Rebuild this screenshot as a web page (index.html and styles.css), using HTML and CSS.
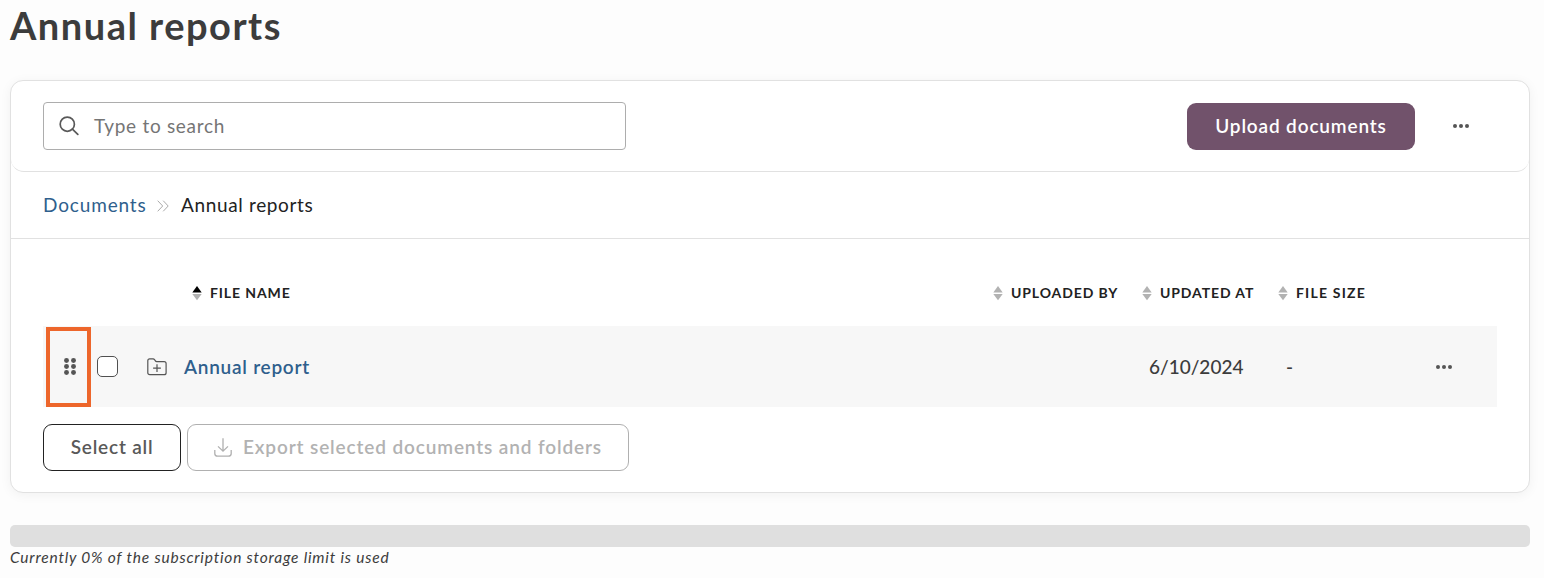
FILE: index.html
```html
<!DOCTYPE html>
<html lang="en">
<head>
<meta charset="utf-8">
<title>Annual reports</title>
<link rel="stylesheet" href="styles.css">
</head>
<body>
<h1 class="title"><span>Annual reports</span></h1>
<main class="card">
  <div class="toolbar">
    <label class="search">
      <svg class="search-icon" width="20" height="20" viewBox="0 0 20 20"><circle cx="8.3" cy="8.2" r="7.1"/><path d="M13.4 13.2 18.8 18.4"/></svg>
      <span class="placeholder">Type to search</span>
    </label>
    <button class="btn upload"><span>Upload documents</span></button>
    <svg class="more" width="16" height="4" viewBox="0 0 16 4"><circle cx="2" cy="2" r="2"/><circle cx="8" cy="2" r="2"/><circle cx="14" cy="2" r="2"/></svg>
  </div>
  <nav class="crumbs">
    <a class="crumb-link">Documents</a>
    <svg class="chevrons" width="12" height="12" viewBox="0 0 12 12"><path d="M.7.7 5.7 6 .7 11.3M6.2.7 11.2 6 6.2 11.3"/></svg>
    <span class="crumb-current">Annual reports</span>
  </nav>
  <div class="content">
    <div class="grid head">
      <div class="th name"><svg class="sort active" width="10" height="15" viewBox="0 0 10 15"><path class="up" d="M5 0 9.7 6.5H.3Z"/><path d="M5 14.3 9.7 8H.3Z"/></svg><span>FILE NAME</span></div>
      <div class="th"><svg class="sort" width="10" height="15" viewBox="0 0 10 15"><path d="M5 0 9.7 6.5H.3Z"/><path d="M5 14.3 9.7 8H.3Z"/></svg><span>UPLOADED BY</span></div>
      <div class="th"><svg class="sort" width="10" height="15" viewBox="0 0 10 15"><path d="M5 0 9.7 6.5H.3Z"/><path d="M5 14.3 9.7 8H.3Z"/></svg><span>UPDATED AT</span></div>
      <div class="th"><svg class="sort" width="10" height="15" viewBox="0 0 10 15"><path d="M5 0 9.7 6.5H.3Z"/><path d="M5 14.3 9.7 8H.3Z"/></svg><span class="wide">FILE SIZE</span></div>
    </div>
    <div class="grid row">
      <div class="file">
        <div class="handle"><svg width="12" height="17" viewBox="0 0 12 17"><circle cx="2.5" cy="2.5" r="2.45"/><circle cx="9.5" cy="2.5" r="2.45"/><circle cx="2.5" cy="8.5" r="2.45"/><circle cx="9.5" cy="8.5" r="2.45"/><circle cx="2.5" cy="14.5" r="2.45"/><circle cx="9.5" cy="14.5" r="2.45"/></svg></div>
        <span class="checkbox"></span>
        <svg class="folder" width="20" height="18" viewBox="0 0 20 18"><path d="M.8 14.7V2.8Q.8.9 2.7.9H6.1Q7 .9 7.5 1.6L8.4 2.9Q8.8 3.6 9.7 3.6H17.1Q19.1 3.6 19.1 5.6V14.7Q19.1 16.7 17.1 16.7H2.8Q.8 16.7.8 14.7ZM10 6.3V14M6.1 10.1H13.9"/></svg>
        <a class="file-link">Annual report</a>
      </div>
      <div></div>
      <div class="date"><span>6/10/2024</span></div>
      <div class="size">-</div>
      <svg class="more" width="16" height="4" viewBox="0 0 16 4"><circle cx="2" cy="2" r="2"/><circle cx="8" cy="2" r="2"/><circle cx="14" cy="2" r="2"/></svg>
    </div>
    <div class="actions">
      <button class="btn select"><span>Select all</span></button>
      <button class="btn export" disabled><svg width="18" height="19" viewBox="0 0 18 19"><path d="M9 .3V13M4 8.4 9 13.2 14 8.4M.8 12V15.4Q.8 18.2 3.6 18.2H14.4Q17.2 18.2 17.2 15.4V12"/></svg><span>Export selected documents and folders</span></button>
    </div>
  </div>
</main>
<div class="meter"></div>
<p class="usage"><span>Currently 0% of the subscription storage limit is used</span></p>
</body>
</html>
```
FILE: styles.css
```css
* { box-sizing: border-box; }
body { margin: 0; padding: 0 14px 0 10px; height: 578px; overflow: hidden; background: #fdfdfd; color: #3c3c3c; font-family: Lato, "Open Sans", sans-serif; font-size: 19px; white-space: nowrap; }
svg { display: block; flex: none; }
.title { margin: 0; height: 80px; padding-top: 1px; font-size: 38px; line-height: 48px; font-weight: 700; letter-spacing: 1.5px; }
.card { height: 413px; border: 1px solid #e1e1e1; border-radius: 13px; background: #fff; box-shadow: 0 2px 12px rgba(0, 0, 0, .05); }
.toolbar { display: flex; align-items: center; height: 91px; padding: 0 60px 0 32px; border-bottom: 1px solid #e1e1e1; border-radius: 13px; }
.search { display: flex; align-items: center; width: 583px; height: 48px; margin-right: auto; padding-left: 15px; border: 1px solid #adadad; border-radius: 4px; }
.search-icon { fill: none; stroke: #595959; stroke-width: 1.7; stroke-linecap: round; }
.placeholder { margin-left: 15px; padding-bottom: 2px; color: #757575; letter-spacing: .7px; }
.btn { display: flex; align-items: center; justify-content: center; height: 47px; padding: 0; border-radius: 9px; font: 600 19px Lato, "Open Sans", sans-serif; }
.btn span { padding-bottom: 2px; }
.upload { width: 228px; margin-right: 38px; border: 0; background: #71526b; color: #fff; letter-spacing: .85px; }
.more { fill: #555; }
.crumbs { display: flex; align-items: center; height: 67px; padding-left: 32px; border-bottom: 1px solid #e1e1e1; }
.crumb-link { width: 114px; padding-bottom: 2px; color: #2f5f8d; letter-spacing: .85px; }
.chevrons { fill: none; stroke: #aaa; stroke-width: 1; margin-top: 2px; }
.crumb-current { margin-left: 12px; padding-bottom: 2px; color: #222; letter-spacing: .65px; }
.content { padding: 0 32px; }
.grid { display: grid; grid-template-columns: 950px 149px 136px 158px 61px; align-items: center; }
.head { height: 87px; padding-top: 22px; }
.th { display: flex; align-items: center; gap: 8px; color: #222; font-size: 14px; font-weight: 700; letter-spacing: .9px; }
.th span { padding-bottom: 2px; }
.th .wide { letter-spacing: 1.2px; }
.name { padding-left: 149px; }
.sort { fill: #b2b2b2; }
.up { fill: #000; }
.row { height: 81px; background: #f7f7f7; }
.file { display: flex; align-items: center; }
.handle { display: flex; align-items: center; justify-content: center; width: 45px; height: 80px; margin: 1px 6px 0 3px; padding: 0 0 1px 3px; border: 4px solid #ed662b; fill: #555; }
.checkbox { width: 21px; height: 21px; border: 1px solid #505050; border-radius: 5px; background: #fff; }
.folder { margin-left: 29px; margin-top: 1px; fill: none; stroke: #555; stroke-width: 1.2; }
.file-link { margin-left: 17px; color: #2f5f8d; font-weight: 600; letter-spacing: .75px; }
.date { padding-left: 7px; font-weight: 500; letter-spacing: 0; }
.size { padding-left: 8px; font-weight: 500; }
.actions { display: flex; gap: 6px; margin-top: 17px; }
.select { width: 138px; border: 1px solid #222; background: #fff; color: #595959; letter-spacing: .8px; }
.export { width: 442px; gap: 11px; border: 1px solid #b0b0b0; background: #fff; color: #b2b2b2; letter-spacing: .87px; }
.export svg { fill: none; stroke: #b0b0b0; stroke-width: 1.3; }
.meter { height: 22px; margin-top: 32px; border-radius: 5px; background: #dfdfdf; }
.usage { margin: 0; line-height: 20px; font-size: 15.5px; font-style: italic; letter-spacing: .8px; }
```
